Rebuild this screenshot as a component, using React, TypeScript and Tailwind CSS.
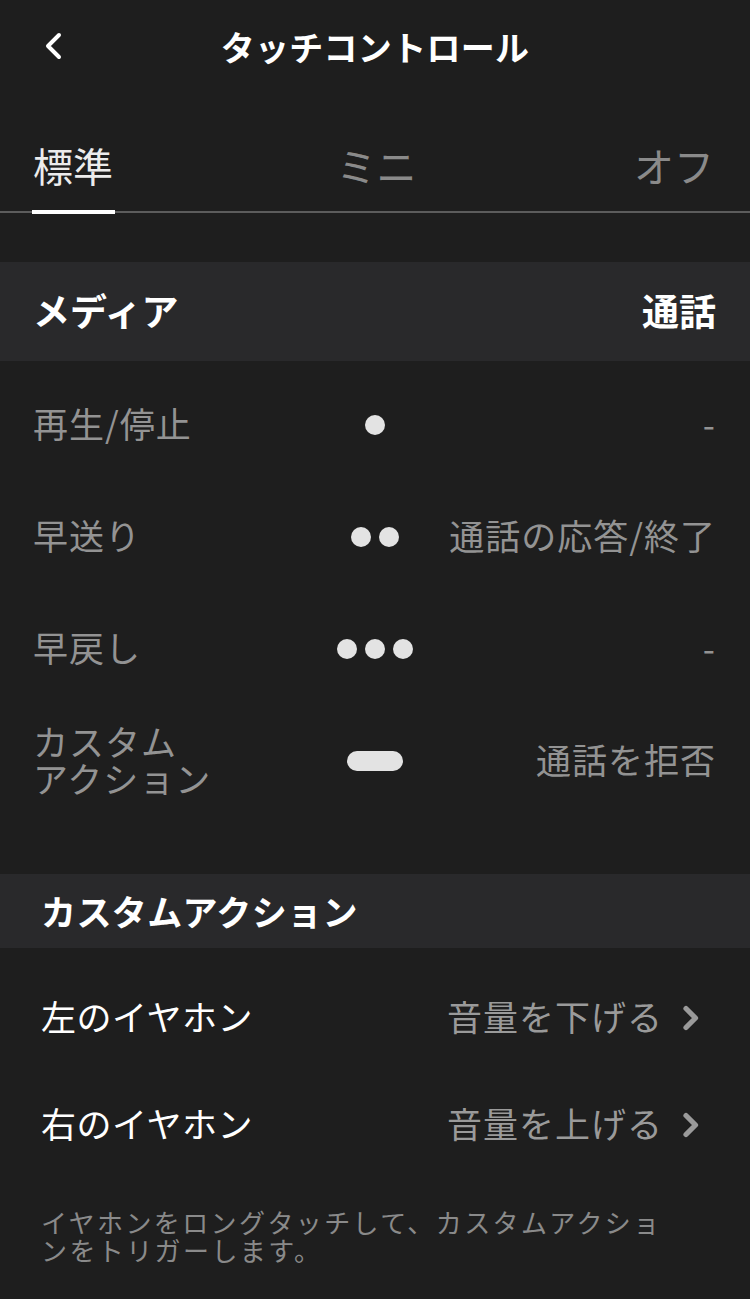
import React from "react";

const Dot = () => <span className="block w-[20px] h-[20px] rounded-full bg-[#e3e3e3]" />;

function Gesture({ kind }: { kind: number }) {
  if (kind === 4) return <span className="block w-[56px] h-[20px] rounded-full bg-[#e3e3e3]" />;
  return (
    <div className="flex gap-[8px]">
      {Array.from({ length: kind }).map((_, i) => (
        <Dot key={i} />
      ))}
    </div>
  );
}

const mediaRows: { label: React.ReactNode; kind: number; value: string }[] = [
  { label: "再生/停止", kind: 1, value: "-" },
  { label: "早送り", kind: 2, value: "通話の応答/終了" },
  { label: "早戻し", kind: 3, value: "-" },
  {
    label: (
      <>
        カスタム
        <br />
        アクション
      </>
    ),
    kind: 4,
    value: "通話を拒否",
  },
];

function ChevronRight() {
  return (
    <svg width="18" height="26" viewBox="0 0 18 26" fill="none">
      <path d="M4 3.5 L13.5 13 L4 22.5" stroke="#9a9a9a" strokeWidth="5.2" strokeLinecap="round" strokeLinejoin="round" />
    </svg>
  );
}

export default function App() {
  return (
    <div className="w-[750px] min-h-[1299px] bg-[#1e1e1e] font-['Noto_Sans_CJK_JP',sans-serif] overflow-hidden">
      {/* Header */}
      <div className="relative h-[96px] flex items-center justify-center">
        <div className="absolute left-[42px] top-[32px]">
          <svg width="24" height="28" viewBox="0 0 24 28" fill="none">
            <path d="M17 3 L6 14 L17 25" stroke="#ffffff" strokeWidth="4" strokeLinecap="round" strokeLinejoin="round" />
          </svg>
        </div>
        <h1 className="text-[34px] leading-[34px] font-bold text-white tracking-[0.3px] -mt-[2px]">タッチコントロール</h1>
      </div>

      {/* Tabs */}
      <div className="flex justify-between items-start pl-[32px] pr-[36px] pt-[49px] h-[117px] border-b-2 border-[#5c5c5c]">
        <div className="relative h-full w-[83px]">
          <span className="block pl-[1px] text-[40px] leading-[40px] text-[#ececec]">標準</span>
          <span className="absolute left-0 right-0 -bottom-[3px] h-[4px] bg-white" />
        </div>
        <span className="text-[40px] leading-[40px] text-[#8a8a8a] pl-[4px]">ミニ</span>
        <span className="text-[40px] leading-[40px] text-[#8a8a8a]">オフ</span>
      </div>

      {/* Media / Call header */}
      <div className="mt-[49px] h-[99px] bg-[#29292b] flex items-center justify-between pl-[33px] pr-[34px]">
        <span className="text-[37px] leading-[37px] font-bold text-white -mt-[3px]">メディア</span>
        <span className="text-[37px] leading-[37px] font-bold text-white -mt-[3px]">通話</span>
      </div>

      <div className="pt-[8px]">
        {mediaRows.map((r, i) => (
          <div key={i} className="h-[112px] flex items-center pl-[33px] pr-[34px]">
            <div className="flex-1 text-[35px] leading-[37px] text-[#939393] tracking-[1px] pb-[5px]">{r.label}</div>
            <div className="w-[56px] flex justify-center">
              <Gesture kind={r.kind} />
            </div>
            <div className="flex-1 text-right text-[35px] leading-[37px] text-[#939393] tracking-[1px] pb-[5px]">{r.value}</div>
          </div>
        ))}
      </div>

      {/* Custom action header */}
      <div className="mt-[57px] h-[74px] bg-[#29292b] flex items-center pl-[41px]">
        <span className="text-[35px] leading-[35px] font-bold text-white tracking-[0.4px] -mt-[2px]">カスタムアクション</span>
      </div>

      <div className="pt-[16px]">
        {[
          { l: "左のイヤホン", v: "音量を下げる" },
          { l: "右のイヤホン", v: "音量を上げる" },
        ].map((r) => (
          <div key={r.l} className="h-[107px] flex items-center justify-between pl-[41px] pr-[50px]">
            <span className="text-[35px] leading-[35px] text-white tracking-[0.5px] -mt-[5px]">{r.l}</span>
            <div className="flex items-center gap-[19px]">
              <span className="text-[35px] leading-[35px] text-[#9a9a9a] tracking-[1px] -mt-[5px]">{r.v}</span>
              <ChevronRight />
            </div>
          </div>
        ))}
      </div>

      {/* Footer note */}
      <p className="pt-[30px] pl-[41px] text-[26px] leading-[28px] text-[#8a8a8a] tracking-[2.4px] whitespace-nowrap">
        イヤホンをロングタッチして、カスタムアクショ
        <br />
        ンをトリガーします。
      </p>
    </div>
  );
}
